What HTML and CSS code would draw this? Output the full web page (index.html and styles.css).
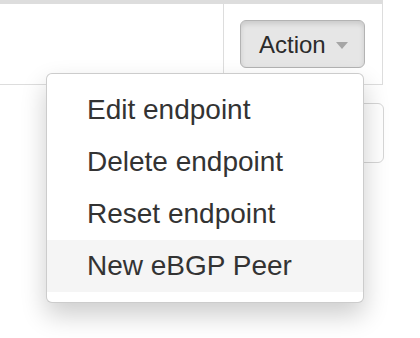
FILE: index.html
```html
<!DOCTYPE html>
<html>
<head>
<meta charset="utf-8">
<link rel="stylesheet" href="styles.css">
</head>
<body>
<div class="page">
  <div class="table">
    <div class="row">
      <div class="cell cell-main"></div>
      <div class="cell cell-action">
        <button class="btn">Action<span class="caret"></span></button>
      </div>
    </div>
  </div>
  <div class="next-row">
    <div class="ghost-box"></div>
  </div>
  <ul class="dropdown-menu">
    <li class="item">Edit endpoint</li>
    <li class="item">Delete endpoint</li>
    <li class="item">Reset endpoint</li>
    <li class="item active">New eBGP Peer</li>
  </ul>
</div>
</body>
</html>
```
FILE: styles.css
```css
html, body {
  margin: 0;
  padding: 0;
  background: #fff;
}
.page {
  position: relative;
  width: 420px;
  height: 338px;
  overflow: hidden;
  font-family: "Liberation Sans", Arial, Helvetica, sans-serif;
  color: #333;
}
.table {
  width: 382px;
  border-top: 4px solid #dddddd;
  border-right: 1px solid #dddddd;
  border-bottom: 1px solid #dddddd;
}
.row {
  display: flex;
}
.cell {
  height: 80px;
  box-sizing: border-box;
}
.cell-main {
  width: 224px;
  border-right: 1px solid #dddddd;
}
.cell-action {
  flex: 1;
  padding: 16px 0 16px 16px;
}
.btn {
  display: flex;
  align-items: center;
  box-sizing: border-box;
  height: 48px;
  width: 125px;
  padding: 1px 0 0 18px;
  margin: 0;
  border: 1px solid #b3b3b3;
  border-radius: 6px;
  background: #e6e6e6;
  box-shadow: inset 0 3px 5px rgba(0,0,0,0.12);
  font-family: "Liberation Sans", Arial, Helvetica, sans-serif;
  font-size: 24px;
  color: #2b2b2b;
  line-height: 1;
}
.caret {
  display: inline-block;
  width: 0;
  height: 0;
  margin-left: 10px;
  margin-top: 2px;
  border-left: 6px solid transparent;
  border-right: 6px solid transparent;
  border-top: 7px solid #a6a6a6;
}
.next-row {
  display: flex;
  justify-content: flex-end;
  width: 384px;
  padding-top: 18px;
}
.ghost-box {
  width: 90px;
  height: 60px;
  box-sizing: border-box;
  border: 1px solid #d6d6d6;
  border-radius: 6px;
  background: #fff;
}
.dropdown-menu {
  position: absolute;
  left: 46px;
  top: 73px;
  width: 318px;
  box-sizing: border-box;
  margin: 0;
  padding: 10px 0;
  list-style: none;
  background: #fff;
  border: 1px solid rgba(0,0,0,0.2);
  border-radius: 6px;
  box-shadow: 0 12px 26px rgba(0,0,0,0.2);
}
.item {
  height: 52px;
  line-height: 52px;
  padding: 0 40px;
  font-size: 28px;
  color: #333;
  white-space: nowrap;
}
.item.active {
  background: #f5f5f5;
}
```
